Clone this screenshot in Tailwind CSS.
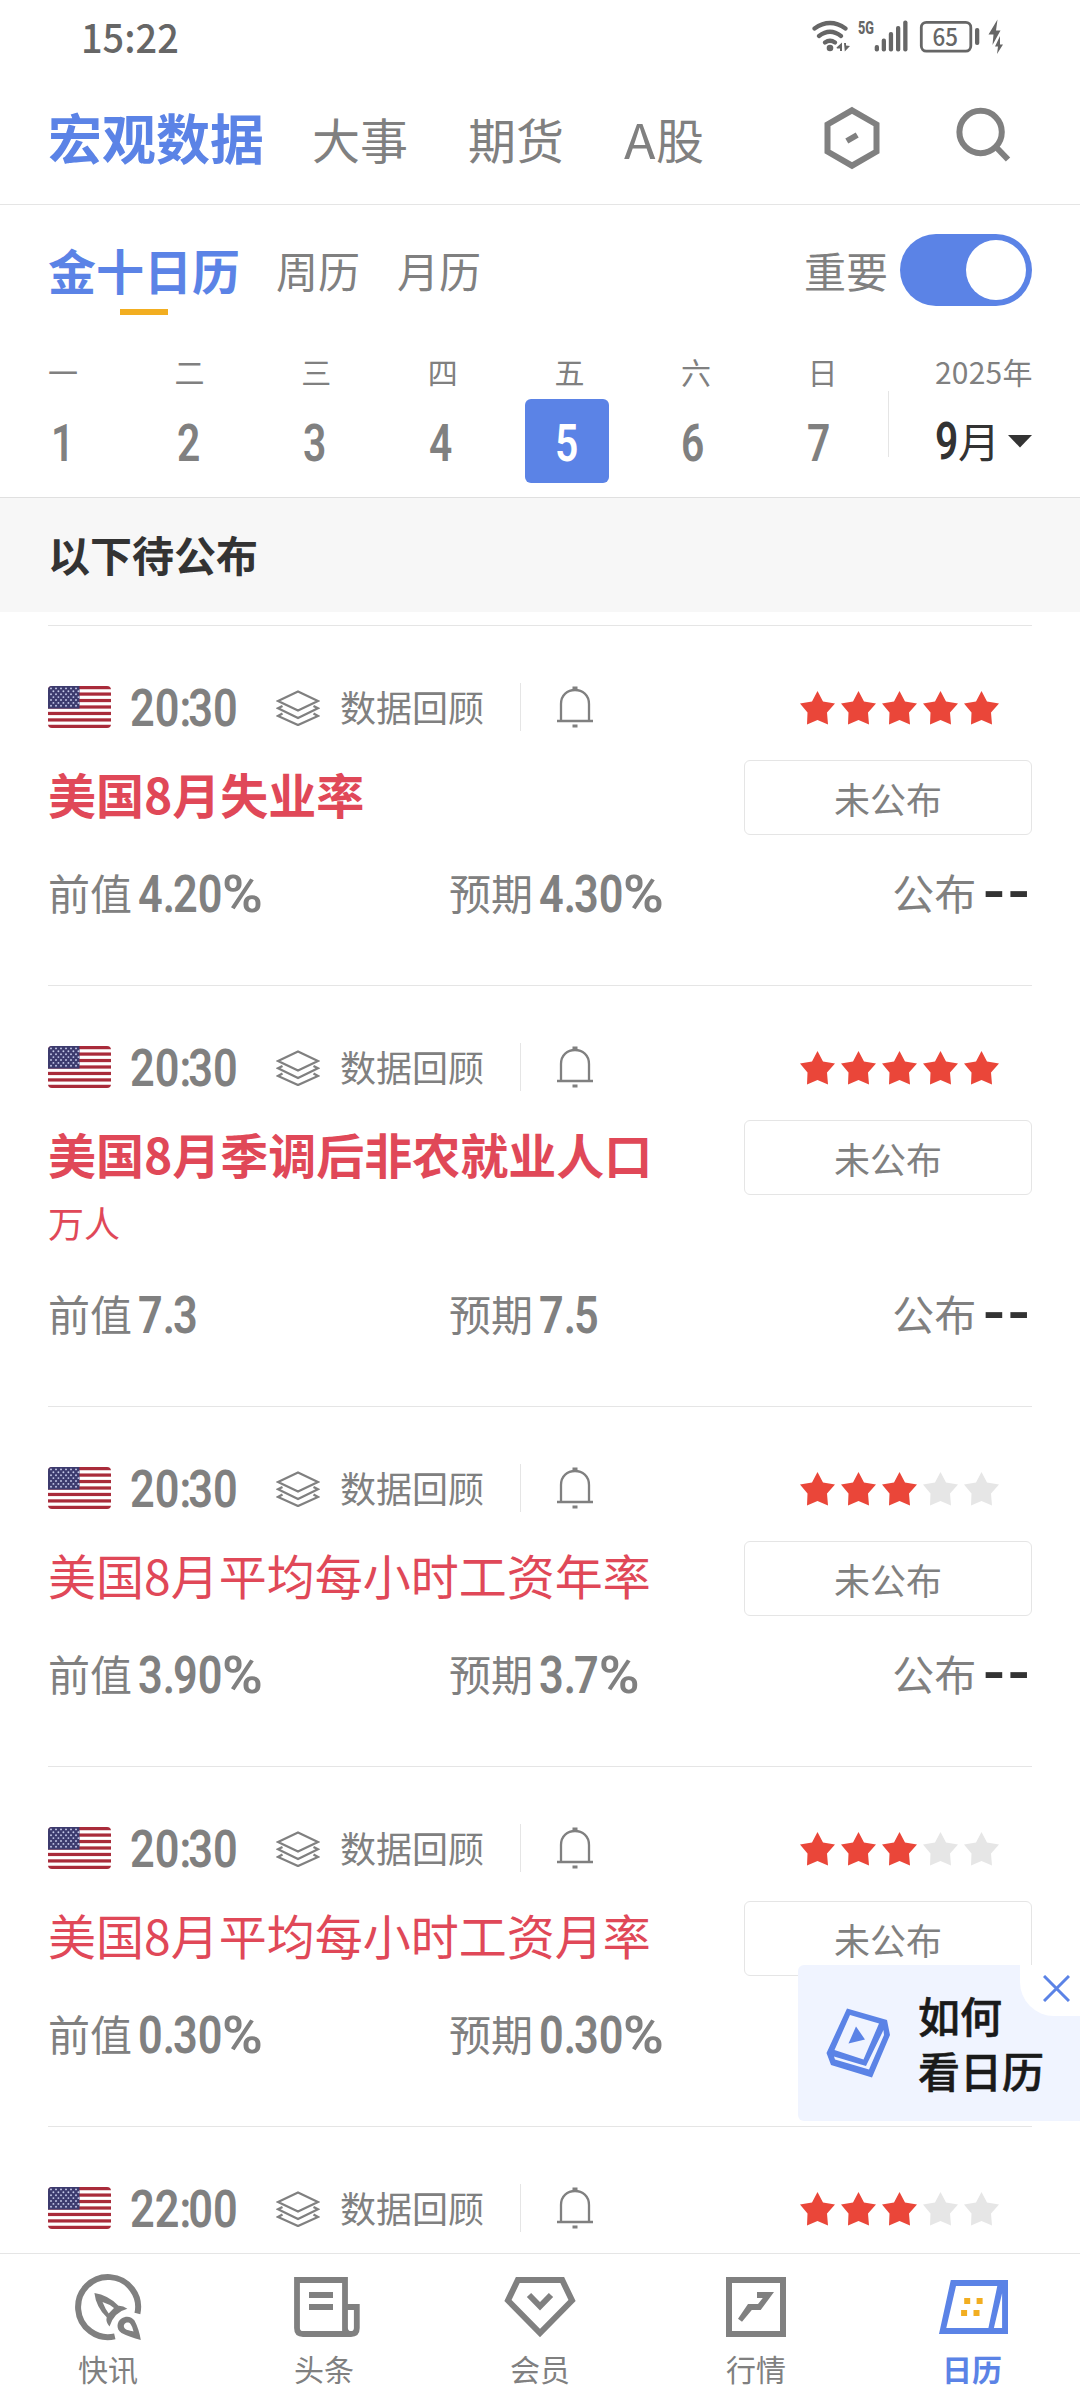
<!DOCTYPE html>
<html lang="zh-CN">
<head>
<meta charset="utf-8">
<title>日历</title>
<script src="https://cdn.jsdelivr.net/npm/@tailwindcss/browser@4"></script>
</head>
<body class="bg-white">
<div class="relative flex h-[2400px] w-[1080px] flex-col overflow-hidden bg-white font-['Noto_Sans_CJK_SC',sans-serif] leading-none text-[#808080]">

  <!-- status bar -->
  <div class="flex h-[72px] shrink-0 justify-between pr-[70px] pl-[81px]">
    <div class="origin-left scale-x-[0.96] pt-[16px] text-[39.5px] leading-[40px] font-medium text-[#666]">15:22</div>
    <svg class="mt-[15px] h-[45px] w-[200px]" viewBox="810 15 200 45" fill="none" stroke="#666" stroke-width="4.2" stroke-linecap="round">
      <path d="M814.500 28.500Q830 17.500 845.500 28.500M819 36Q830 27.500 841 36M825 42.500Q830 39 835 42.500" />
      <g fill="#666" stroke="none">
        <circle cx="830" cy="48" r="3.3"/>
        <path d="M836.500 47.500L842 42.500V51H840V48.500H837ZM844 43H846V45.500L850 46L844.800 51.500Z"/>
        <rect x="874.700" y="45" width="4.300" height="6.500" rx="2"/>
        <rect x="881.700" y="38.500" width="4.300" height="13" rx="2"/>
        <rect x="888.800" y="32" width="4.300" height="19.500" rx="2"/>
        <rect x="896" y="26" width="4.300" height="25.500" rx="2"/>
        <rect x="903.200" y="20.500" width="4.300" height="31" rx="2"/>
        <rect x="975" y="28" width="4.300" height="17" rx="2"/>
        <path d="M997.500 19.500L988.500 34.500H993.500L992.500 45L1000.500 30.500H996ZM1000 36L995 46.500H998L997 54L1003 44.500H1000Z"/>
        <text x="858" y="34" font-family="Roboto" font-weight="800" font-size="18" textLength="16" lengthAdjust="spacingAndGlyphs">5G</text>
        <text x="932.500" y="46" font-family="Noto Sans CJK SC" font-weight="500" font-size="24" textLength="25.500" lengthAdjust="spacingAndGlyphs">65</text>
      </g>
      <rect x="921.300" y="22.300" width="49.500" height="28.800" rx="5" stroke-width="2.800"/>
    </svg>
  </div>

  <!-- main tabs -->
  <div class="flex h-[133px] shrink-0 items-center border-b border-[#e5e5e5] pl-12">
    <div class="w-[264px] pb-[2px] text-[54px] font-bold text-[#5b83e6]">宏观数据</div>
    <div class="w-[156px] pb-[1px] text-[48px]">大事</div>
    <div class="w-[156px] pb-[1px] text-[48px]">期货</div>
    <div class="flex w-[196px] pb-[1px] text-[48px]"><span class="w-[32px] origin-left scale-x-[1.08]">A</span>股</div>
    <svg class="h-[64px] w-[64px]" viewBox="820 106 64 64" fill="none" stroke="#808080" stroke-width="6">
      <path d="M852 110.300L876.500 124.500V151.500L852 165.700L827.500 151.500V124.500ZM846.800 141L857.200 135"/>
    </svg>
    <svg class="ml-[68px] h-[64px] w-[64px]" viewBox="952 106 64 64" fill="none" stroke="#808080" stroke-width="6">
      <circle cx="980.600" cy="132" r="21.200"/><path d="M996 147L1008 159.500"/>
    </svg>
  </div>

  <!-- calendar tabs -->
  <div class="flex h-[145px] shrink-0 pr-12 pl-12">
    <div class="flex w-[228px] flex-col items-start pt-[40px]">
      <div class="text-[48px] leading-[48px] font-bold text-[#5b83e6]">金十日历</div>
      <div class="mt-[16px] ml-[72px] h-[6px] w-[48px] bg-[#f2ae21]"></div>
    </div>
    <div class="w-[121px] pt-[44px] text-[42px] leading-[42px]">周历</div>
    <div class="pt-[44px] text-[42px] leading-[42px]">月历</div>
    <div class="mr-[12px] ml-auto pt-[44px] text-[42px] leading-[42px]">重要</div>
    <div class="mt-[29px] flex h-[72px] w-[132px] items-center justify-end rounded-full bg-[#5b83e6] pr-[6px]">
      <div class="size-[60px] rounded-full bg-white"></div>
    </div>
  </div>

  <!-- week strip -->
  <div class="flex h-[148px] shrink-0 border-b border-[#e0e0e0] pr-12">
    <div id="week" class="flex w-[888px]"></div>
    <div class="mt-[41px] h-[66px] w-px bg-[#e5e5e5]"></div>
    <div class="ml-auto flex w-[97px] flex-col">
      <div class="mt-[5px] text-[30px] leading-[32px] tracking-[0.2px] whitespace-nowrap">2025年</div>
      <div class="mt-[32px] flex h-[42px] items-center text-[#333]">
        <span class="w-[23px] origin-left scale-x-[0.8] pt-[3px] font-[Roboto,sans-serif] text-[51px] font-semibold">9</span>
        <span class="w-[50px] text-[42px]">月</span>
        <svg class="mt-[2px] h-[13px] w-[24px]" viewBox="0 0 24 13"><path d="M0 0H24L12 12.500Z" fill="#333"/></svg>
      </div>
    </div>
  </div>

  <div class="flex h-[114px] shrink-0 items-center bg-[#f7f7f7] pb-[2px] pl-12 text-[42px] font-bold text-[#333]">以下待公布</div>

  <div id="list" class="h-[1641px] shrink-0 overflow-hidden px-12 pt-[13px]"></div>

  <!-- bottom navigation -->
  <div class="grid h-[147px] shrink-0 grid-cols-5 border-t border-[#e5e5e5] bg-white text-[30px]">
    <div class="flex flex-col items-center pt-[16px]">
      <svg class="size-[72px]" viewBox="0 0 72 72">
        <path d="M65.400 43.500A30 30 0 1 0 42.800 66.300" fill="none" stroke="#808080" stroke-width="6"/>
        <path fill="#808080" fill-rule="evenodd" d="M22.400 23Q36 25 46.500 35.700Q51 35.500 55.400 38.700Q42 42 37.500 56.500Q33.500 52 34.700 47.300Q24 37 22.400 23ZM30.500 32Q33.500 39.500 36.700 43.500L42 38Q37 34 30.500 32Z"/>
        <path fill="#808080" fill-rule="evenodd" d="M68.800 70Q57.500 67 49.500 63C43.500 59 45 51 49.500 48.500C54 45.500 59.500 46.300 62.500 50.500Q67 59 68.800 70ZM61.500 61.500Q60.500 56.500 58.500 54C56 50.800 51 53.500 52 57C52.800 60 57 60.300 61.500 61.500Z"/>
      </svg>
      <div class="mt-[9px] leading-[34px]">快讯</div>
    </div>
    <div class="flex flex-col items-center pt-[16px]">
      <svg class="ml-[2px] size-[74px]" viewBox="0 0 74 74" fill="none" stroke="#808080" stroke-width="5.800">
        <path d="M57 64V10H9V58Q9 64 15 64H63Q68.800 64 68.800 58V37H57V58Q57 64 63 64M21 25H45M21 37H45"/>
      </svg>
      <div class="mt-[7px] leading-[34px]">头条</div>
    </div>
    <div class="flex flex-col items-center pt-[16px]">
      <svg class="size-[72px]" viewBox="0 0 72 72" fill="none" stroke="#808080" stroke-width="6">
        <path d="M13.800 10H58.200L68 30.500L36 63L4 30.500ZM25 25L36 36.300L47 25"/>
      </svg>
      <div class="mt-[9px] leading-[34px]">会员</div>
    </div>
    <div class="flex flex-col items-center pt-[16px]">
      <svg class="size-[72px]" viewBox="0 0 72 72">
        <rect x="9" y="10" width="54" height="54" fill="none" stroke="#808080" stroke-width="6"/>
        <path fill="#808080" d="M37 22H54L40.700 40H31.800L22 51.700L18 48.700L28 34H38L42.800 28H37Z"/>
      </svg>
      <div class="mt-[9px] leading-[34px]">行情</div>
    </div>
    <div class="flex flex-col items-center pt-[16px]">
      <svg class="size-[72px]" viewBox="0 0 72 72">
        <path fill="#5b83e6" fill-rule="evenodd" d="M14.800 10H72V64H3ZM20 16L10.300 58H52.400L61.300 16ZM66.100 23.300L57.900 58H66.100Z"/>
        <path fill="#f2ae21" d="M28.200 28h6v6h-6zM40.600 28h6v6h-6zM25.100 40h6v6h-6zM37.500 40h6v6h-6z"/>
      </svg>
      <div class="mt-[9px] leading-[34px] font-bold text-[#5b83e6]">日历</div>
    </div>
  </div>

  <!-- floating help card -->
  <div class="absolute top-[1965px] left-[798px] flex h-[156px] w-[282px] rounded-l-[6px] bg-[#f0f4ff]">
    <svg class="mt-[42px] ml-[27px] h-[72px] w-[66px]" viewBox="825 2007 66 72" fill="#5b83e6">
      <path fill-rule="evenodd" d="M847 2008.500L887 2020L890 2035L872 2077.500L831 2065L826.500 2053ZM850 2015L834.500 2050L863.500 2059.500L879 2023.500ZM883.500 2030L866 2066L834 2056.500L835 2059.500L869 2069.500L884 2035Z"/>
      <path d="M856 2026.500L865 2039.500L848.500 2043.500Z"/>
    </svg>
    <div class="ml-[27px] pt-[22px] text-[42px] leading-[55px] font-medium text-[#1a1a1a] [-webkit-text-stroke:0.6px_#1a1a1a]">如何<br>看日历</div>
    <div class="absolute top-0 right-0 h-[51px] w-[60px] rounded-bl-[34px] bg-white">
      <svg class="mt-[10px] ml-[23px] size-[27px]" viewBox="0 0 27 27" stroke="#5b83e6" stroke-width="3"><path d="M1 1L26 26M26 1L1 26"/></svg>
    </div>
  </div>
</div>

<script>
  const days = ['一', '二', '三', '四', '五', '六', '日'];
  document.getElementById('week').innerHTML = days.map((d, i) => `
    <div class="flex w-[126px] shrink-0 flex-col items-center">
      <div class="mt-[5px] text-[30px] leading-[32px]" style="transform:translateX(${i * 0.6}px)">${d}</div>
      <div class="mt-[12px] flex size-[84px] items-center justify-center rounded-[6px] pt-[4px] ${i === 4 ? 'bg-[#5b83e6] text-white' : ''}">
        <span class="scale-x-[0.8] font-[Roboto,sans-serif] text-[51px] font-semibold">${i + 1}</span>
      </div>
    </div>`).join('');

  let starDots = '';
  for (let r = 0; r < 7; r++) for (let c = 0; c < 6; c++)
    starDots += `<circle cx="${3 + c * 5 + (r % 2 ? 2.4 : 0)}" cy="${2.4 + r * 2.9}" r="0.95"/>`;
  let stripes = '';
  for (let i = 0; i < 13; i += 2) stripes += `<rect y="${i * 42 / 13}" width="63" height="${42 / 13}"/>`;
  const flag = `<svg class="h-[42px] w-[63px] rounded-[4px]" viewBox="0 0 63 42"><rect width="63" height="42" fill="#fff"/><g fill="#a92b3a">${stripes}</g><rect width="31.500" height="22.600" fill="#3c3b6e"/><g fill="#c5c9e8">${starDots}</g></svg>`;

  const star = on => `<svg class="h-[34px] w-[35px]" viewBox="0 0 35 34"><path fill="${on ? '#ea4639' : '#e6e6e6'}" d="M17.500 0L23 10.500L35 12.500L27 21.500L28 33.500L17.500 29L7 33.500L7.500 21.500L0 12.500L12 10.500Z"/></svg>`;

  // narrow the separators and widen the percent sign inside condensed figures
  const figure = v => v
    .replace('.', '<span class="tracking-[-2.5px]">.</span>')
    .replace(':', '<span class="tracking-[-3.5px]">:</span>')
    .replace('%', '<span class="inline-block origin-left scale-x-[1.28]">%</span>');
  const num = v => `<span class="ml-[6px] inline-block origin-left scale-x-[0.84] pt-[6px] font-[Roboto,sans-serif] text-[51.5px] leading-[36px] font-semibold">${figure(v)}</span>`;

  const items = [
    { time: '20:30', stars: 5, title: '美国8月失业率', bold: true, prev: '4.20%', exp: '4.30%', actual: '--' },
    { time: '20:30', stars: 5, title: '美国8月季调后非农就业人口', bold: true, unit: '万人', prev: '7.3', exp: '7.5', actual: '--' },
    { time: '20:30', stars: 3, title: '美国8月平均每小时工资年率', prev: '3.90%', exp: '3.7%', actual: '--' },
    { time: '20:30', stars: 3, title: '美国8月平均每小时工资月率', prev: '0.30%', exp: '0.30%' },
    { time: '22:00', stars: 3 },
  ];
  document.getElementById('list').innerHTML = items.map(it => `
    <div class="border-t border-[#e5e5e5] pt-[57px] ${it.unit ? 'h-[421px]' : 'h-[360px]'}">
      <div class="flex h-[48px] items-center">
        ${flag}
        <div class="w-[145px] shrink-0 pl-[19px]"><span class="inline-block origin-left scale-x-[0.84] pt-[4px] font-[Roboto,sans-serif] text-[51.5px] font-semibold">${figure(it.time)}</span></div>
        <svg class="mt-[2px] ml-[20px] h-[36px] w-[44px]" viewBox="0 0 44 36" fill="none" stroke="#808080" stroke-width="2.300"><path d="M22 1.500L42 11L22 20.500L2 11ZM6.500 16L2 18.300L22 28L42 18.300L37.500 16M6.500 23.500L2 26L22 35L42 26L37.500 23.500"/></svg>
        <div class="ml-[20px] w-[180px] pb-[2px] text-[36px]">数据回顾</div>
        <div class="h-[48px] w-px bg-[#e5e5e5]"></div>
        <svg class="ml-[36px] h-[42px] w-[36px]" viewBox="0 0 36 42" fill="none" stroke="#808080" stroke-width="2.300"><path d="M0 35H36M4 35V18C4 9 10.500 4 18 4S32 9 32 18V35"/><path d="M15.500 2H20.500M15.500 40H20.500" stroke-width="3"/></svg>
        <div class="ml-auto flex gap-[6px] pt-[2px] pr-[33px]">${[0, 1, 2, 3, 4].map(i => star(i < it.stars)).join('')}</div>
      </div>
      ${it.title ? `
      <div class="mt-[29px] flex justify-between ${it.unit ? 'h-[136px]' : 'h-[75px]'}">
        <div class="text-[#e04858]">
          <div class="text-[48px] leading-[66px] ${it.bold ? 'font-bold' : ''}">${it.title}</div>
          ${it.unit ? `<div class="mt-[18px] text-[36px] leading-[36px]">${it.unit}</div>` : ''}
        </div>
        <div class="flex h-[75px] w-[288px] items-center justify-center rounded-[6px] border border-[#e5e5e5] text-[36px]">未公布</div>
      </div>
      <div class="mt-[36px] grid h-[42px] grid-cols-[401px_1fr_auto] items-center text-[42px]">
        <div class="flex items-center">前值${num(it.prev)}</div>
        <div class="flex items-center">预期${num(it.exp)}</div>
        ${it.actual ? `<div class="flex items-center">公布<span class="ml-[6px] pb-[2px] font-[Inter,sans-serif] text-[50px] leading-[39px] font-bold tracking-[1.5px] text-[#333]">${it.actual}</span></div>` : ''}
      </div>` : ''}
    </div>`).join('');
</script>
</body>
</html>
